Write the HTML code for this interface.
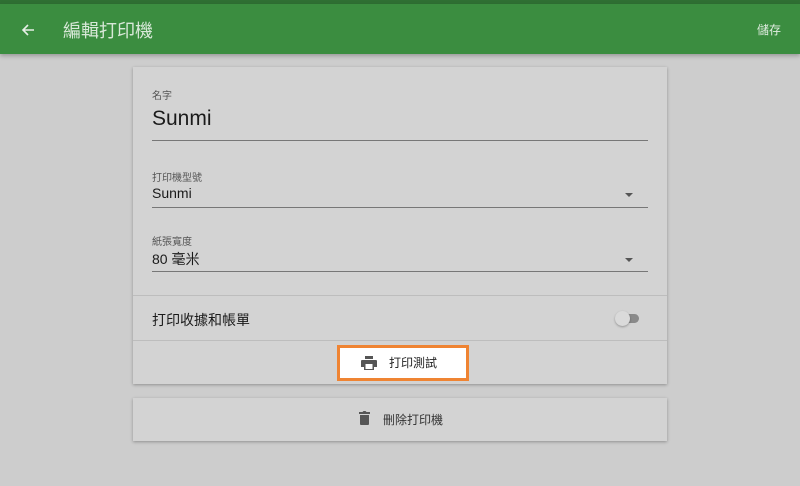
<!DOCTYPE html>
<html><head><meta charset="utf-8"><style>
*{margin:0;padding:0;box-sizing:border-box}
body{width:800px;height:486px;background:#cdcdcd;font-family:"Liberation Sans","Noto Sans CJK TC",sans-serif;position:relative;overflow:hidden;color:#222}
.top{position:absolute;left:0;top:0;width:800px;height:4px;background:#2f6f33}
.bar{position:absolute;left:0;top:4px;width:800px;height:50px;background:#3b8d40;box-shadow:0 2px 4px rgba(0,0,0,.25)}
.bar .t{position:absolute;left:63px;top:13px;font-size:18px;color:#d8e8d8}
.bar .s{position:absolute;right:19px;top:17px;font-size:12px;color:#e0ece0}
.card{position:absolute;left:133px;width:534px;background:#d3d3d3;box-shadow:0 1px 3px rgba(0,0,0,.3)}
.lbl{position:absolute;left:19px;font-size:10px;color:#555}
.val{position:absolute;left:19px;color:#1a1a1a}
.line{position:absolute;left:19px;width:496px;height:1px;background:#777}
.caret{position:absolute;left:492px;width:0;height:0;border-left:4px solid transparent;border-right:4px solid transparent;border-top:4px solid #555}
.hr{position:absolute;left:0;width:534px;height:1px;background:#bdbdbd}
</style></head><body>
<div class="top"></div>
<div class="bar">
<svg style="position:absolute;left:21px;top:19px" width="14" height="14" viewBox="0 0 14 14"><path d="M13 7H2M7 2L2 7l5 5" stroke="#e6efe6" stroke-width="1.6" fill="none"/></svg>
<div class="t">編輯打印機</div><div class="s">儲存</div></div>
<div class="card" style="top:67px;height:317px">
<div class="lbl" style="top:20px">名字</div>
<div class="val" style="top:40px;font-size:21px">Sunmi</div>
<div class="line" style="top:73px"></div>
<div class="lbl" style="top:102px">打印機型號</div>
<div class="val" style="top:118px;font-size:14px">Sunmi</div>
<div class="caret" style="top:126px"></div>
<div class="line" style="top:140px"></div>
<div class="lbl" style="top:166px">紙張寬度</div>
<div class="val" style="top:182px;font-size:14px">80 毫米</div>
<div class="caret" style="top:191px"></div>
<div class="line" style="top:204px"></div>
<div class="hr" style="top:228px"></div>
<div class="val" style="top:243px;font-size:14px">打印收據和帳單</div>
<div style="position:absolute;left:484px;top:247px;width:22px;height:9px;border-radius:5px;background:#8a8a8a"></div>
<div style="position:absolute;left:482px;top:244px;width:15px;height:15px;border-radius:50%;background:#dadada;box-shadow:0 1px 2px rgba(0,0,0,.3)"></div>
<div class="hr" style="top:273px"></div>
<div style="position:absolute;left:204px;top:278px;width:132px;height:36px;background:#fff;border:3px solid #ef8433">
<svg style="position:absolute;left:21px;top:8px" width="16" height="14" viewBox="0 0 16 14"><path d="M4 0h8v3H4z M1 4h14a1 1 0 0 1 1 1v6h-3v3H3v-3H0V5a1 1 0 0 1 1-1z" fill="#555"/><rect x="4.5" y="8" width="7" height="5" fill="#fff"/></svg>
<div style="position:absolute;left:49px;top:6px;font-size:12px">打印測試</div></div>
</div>
<div class="card" style="top:398px;height:43px">
<svg style="position:absolute;left:226px;top:13px" width="11" height="14" viewBox="0 0 11 14"><path d="M0 1h3.5l1-1h2l1 1H11v2H0z M1 4h9v9a1 1 0 0 1-1 1H2a1 1 0 0 1-1-1z" fill="#555"/></svg>
<div style="position:absolute;left:250px;top:13px;font-size:12px;color:#333">刪除打印機</div>
</div>
</body></html>
